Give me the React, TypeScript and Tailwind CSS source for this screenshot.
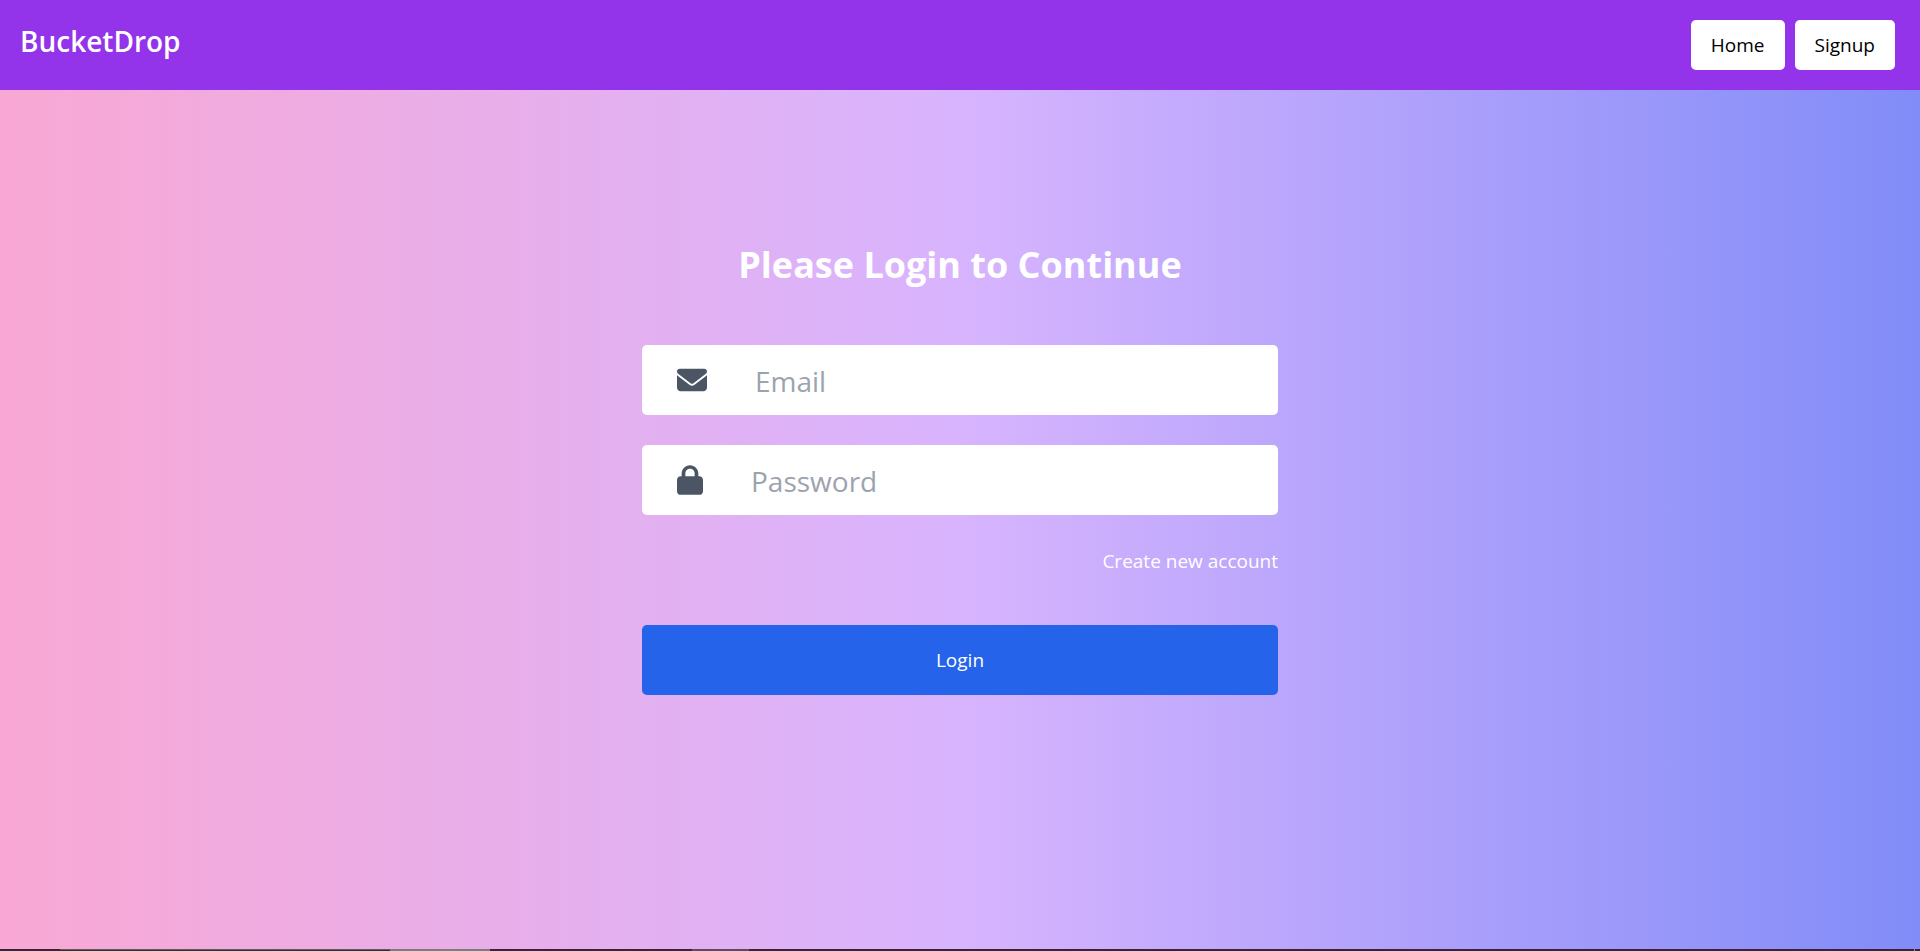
import React from "react";
import { FaEnvelope, FaLock } from "react-icons/fa6";

const navLink =
  "flex h-[50px] items-center rounded-[5px] bg-white px-5 text-[19px] text-black";
const field =
  "flex h-[70px] items-center gap-12 rounded-[5px] bg-white px-[35px] text-[#4b5563]";
const input =
  "min-w-0 flex-1 bg-transparent pt-[2px] text-[28px] leading-[40px] text-black outline-none placeholder:text-[#9ca3af]";

export default function App() {
  return (
    <div className="flex min-h-screen flex-col font-['Open_Sans','Noto_Sans',sans-serif]">
      <header className="flex items-start justify-between bg-[#9333ea] py-5 pr-[25px] pl-5">
        <a href="#" className="text-[28px] leading-[42px] font-semibold text-white">
          BucketDrop
        </a>
        <nav className="flex gap-[10px]">
          <a href="#" className={navLink}>Home</a>
          <a href="#" className={navLink}>Signup</a>
        </nav>
      </header>
      <main className="flex flex-1 flex-col items-center bg-linear-to-r/srgb from-[#f9a8d4] via-[#d8b4fe] to-[#818cf8] pt-[150px]">
        <form className="flex w-full max-w-[636px] flex-col">
          <h1 className="text-center text-4xl leading-[50px] font-bold text-white">
            Please Login to Continue
          </h1>
          <label className={`${field} mt-[55px]`}>
            <FaEnvelope size={30} />
            <input type="email" aria-label="Email" placeholder="Email" className={input} />
          </label>
          <label className={`${field} mt-[30px]`}>
            <FaLock className="h-[30px] w-[26px]" />
            <input type="password" aria-label="Password" placeholder="Password" className={input} />
          </label>
          <a href="#" className="mt-[30px] self-end text-[19px] leading-[32px] text-white">
            Create new account
          </a>
          <button type="submit" className="mt-12 h-[70px] rounded-[5px] bg-[#2563eb] text-[19px] text-white">
            Login
          </button>
        </form>
      </main>
      <div className="flex h-[2px] bg-[#372438]">
        <div className="ml-[60px] w-[330px] border-t border-[#5c5c5c] bg-[#333333]" />
        <div className="w-[100px] bg-[#7c7c7c]" />
        <div className="ml-[202px] w-[57px] bg-[#5e4b62]" />
        <div className="mr-[5px] ml-auto w-px bg-[#8a8a94]" />
      </div>
    </div>
  );
}
